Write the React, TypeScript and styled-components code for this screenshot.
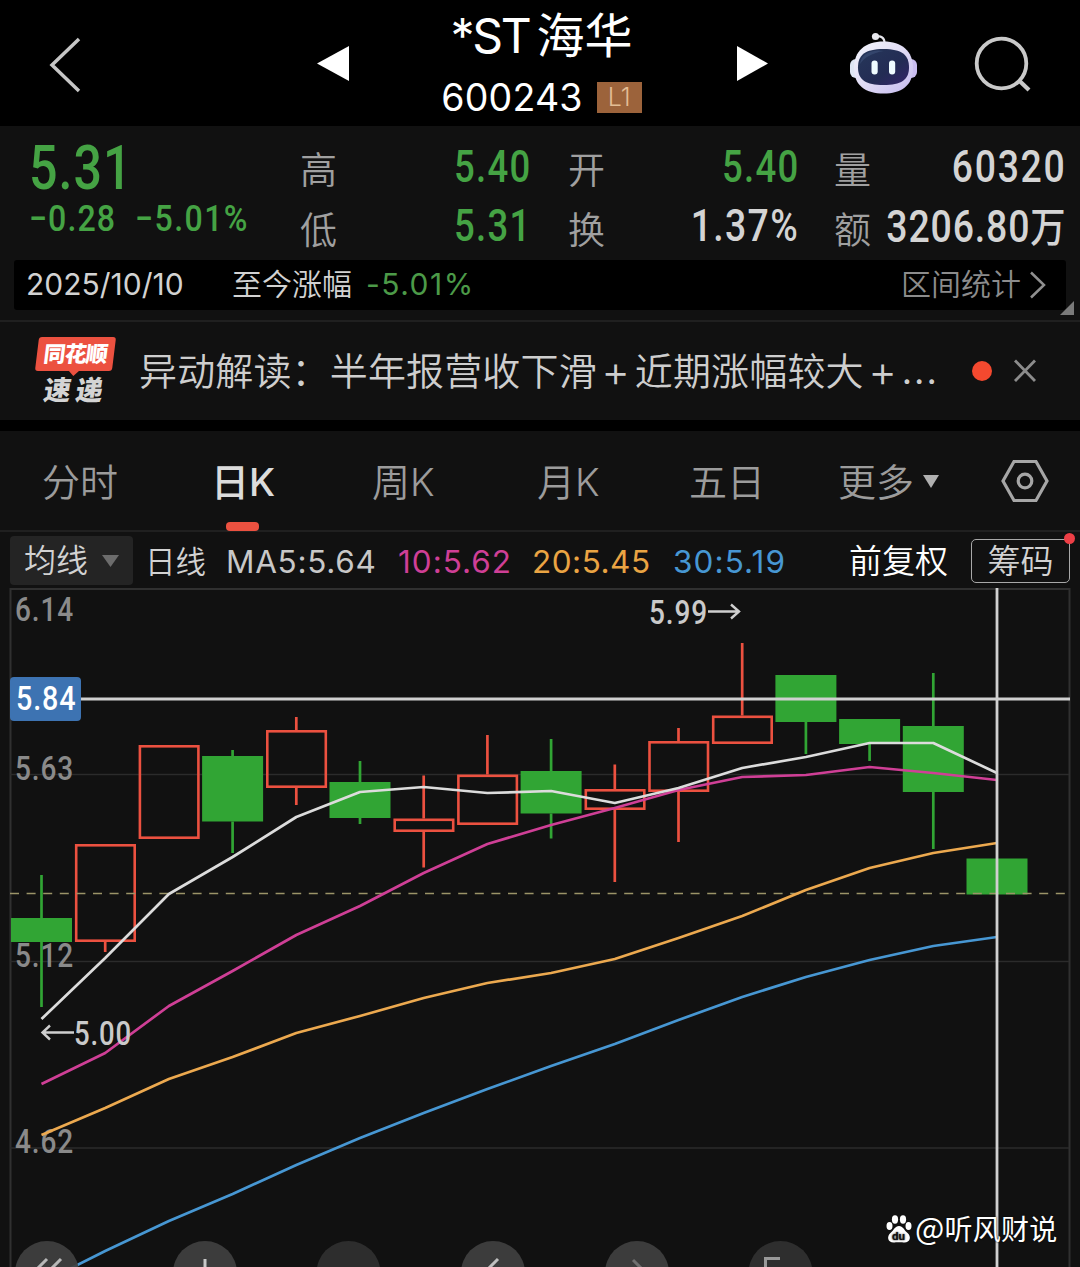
import React from "react";
import styled, { createGlobalStyle } from "styled-components";

const GREEN = "#45a344";
const RED = "#ec5140";
const PANEL = "#111111";
const UI = `Inter, "Noto Sans CJK SC", sans-serif`;
const NUM = `Roboto, "Noto Sans CJK SC", sans-serif`;

const Global = createGlobalStyle`
  * { box-sizing: border-box; }
  body { margin: 0; background: #000; }
`;

const Screen = styled.main`
  width: 1080px;
  height: 1267px;
  overflow: hidden;
  display: flex;
  flex-direction: column;
  background: ${PANEL};
  color: #d2d2d2;
  font-family: ${UI};
  font-weight: 350;
  white-space: nowrap;
`;

/* ---------- header ---------- */
const Header = styled.header`
  height: 126px;
  flex: none;
  display: grid;
  grid-template-columns: 317px 33px 384px 35px 81px 66px 58px 1fr;
  background: #000;
  color: #fff;
`;
const IconCell = styled.div<{ $top: number; $left?: number }>`
  padding: ${(p) => p.$top}px 0 0 ${(p) => p.$left ?? 0}px;
  svg { display: block; }
`;
const TitleBlock = styled.div`
  display: flex;
  flex-direction: column;
  align-items: center;
  padding: 8px 1px 0 0;
`;
const StockName = styled.div`
  display: flex;
  gap: 7px;
  height: 56px;
  line-height: 56px;
  font-size: 48px;
  font-weight: 400;
`;
const Ticker = styled.span`
  letter-spacing: -2.2px;
`;
const StockCode = styled.div`
  display: flex;
  align-items: center;
  gap: 14px;
  margin-top: 12px;
  height: 42px;
  font-size: 37.5px;
  font-weight: 400;
  letter-spacing: 0.2px;
`;
const Level = styled.span`
  width: 45px;
  height: 31px;
  line-height: 31px;
  text-align: center;
  font-size: 25px;
  font-weight: 300;
  letter-spacing: 0;
  background: #9c633b;
  color: #e3bd95;
`;

/* ---------- quote ---------- */
const Quote = styled.section`
  height: 196px;
  flex: none;
  position: relative;
  padding: 14px 14px 0;
  border-bottom: 2px solid #202020;
`;
const QuoteGrid = styled.div`
  display: grid;
  grid-template-columns: 286px 230px 38px 230px 36px 231px;
  height: 120px;
`;
const PriceBlock = styled.div`
  padding-left: 15px;
`;
const Digits = styled.div<{
  $size: number;
  $scale: number;
  $line: number;
  $color?: string;
  $right?: boolean;
  $weight?: number;
  $track?: number;
}>`
  width: max-content;
  font-family: ${NUM};
  font-size: ${(p) => p.$size}px;
  line-height: ${(p) => p.$line}px;
  font-weight: ${(p) => p.$weight ?? 500};
  letter-spacing: ${(p) => p.$track ?? 1.6}px;
  color: ${(p) => p.$color ?? "#d4d4d4"};
  transform: scaleX(${(p) => p.$scale});
  transform-origin: ${(p) => (p.$right ? "right" : "left")} center;
  margin: ${(p) => (p.$right ? "0 -1.5px 0 -60px" : "0")};
`;
const ChangeRow = styled.div`
  display: grid;
  grid-template-columns: 106px auto;
`;
const Pair = styled.div`
  display: flex;
  flex-direction: column;
`;
const Field = styled.div`
  display: flex;
  justify-content: space-between;
  height: 60px;
`;
const Label = styled.span`
  height: 60px;
  line-height: 62px;
  font-size: 37px;
  color: #a0a0a0;
`;
const Wan = styled.span`
  font-size: 41px;
`;
const RangeBar = styled.div`
  display: grid;
  grid-template-columns: 206px 134px 1fr auto 27px;
  height: 50px;
  line-height: 49px;
  padding: 0 18px 0 12px;
  border-radius: 3px;
  background: #000;
  font-size: 30px;
`;
const DateText = styled.span`
  font-weight: 400;
`;
const Drop = styled.span`
  color: #4c9a48;
  font-weight: 400;
  letter-spacing: 1.5px;
`;
const RangeLink = styled.span`
  color: #8c8c8c;
`;
const Corner = styled.svg`
  position: absolute;
  right: 6px;
  bottom: 5px;
`;

/* ---------- news ---------- */
const News = styled.section`
  height: 98px;
  flex: none;
  display: grid;
  grid-template-columns: 104px 833px 41px 1fr;
  padding-left: 35px;
`;
const Brand = styled.div`
  padding-top: 15px;
  font-weight: 900;
  color: #fff;
`;
const BrandTop = styled.div`
  position: relative;
  width: 77px;
  height: 34px;
  margin-left: 2px;
  line-height: 35px;
  font-size: 22px;
  letter-spacing: -0.9px;
  text-align: center;
  border-radius: 3px;
  background: ${RED};
  transform: skewX(-7deg);
  &::after {
    content: "";
    position: absolute;
    left: 34px;
    top: 34px;
    border: 5px solid transparent;
    border-top-color: ${RED};
    border-bottom: 0;
  }
`;
const BrandBottom = styled.div`
  display: flex;
  gap: 5px;
  padding-left: 9px;
  margin-top: 6px;
  line-height: 28px;
  font-size: 27px;
  color: #d4d4d4;
  transform: skewX(-9deg);
`;
const Headline = styled.div`
  display: flex;
  line-height: 99px;
  height: 98px;
  font-size: 38px;
  letter-spacing: 0.15px;
  color: #cecece;
`;
const Plus = styled.span`
  width: 38px;
  text-align: center;
  font-size: 44px;
  font-weight: 300;
`;
const Dots = styled.span`
  font-size: 36px;
  letter-spacing: 2px;
  font-weight: 400;
`;
const Unread = styled.i`
  width: 20px;
  height: 20px;
  margin-top: 39px;
  border-radius: 50%;
  background: #f4492f;
`;
const Divider = styled.div`
  height: 11px;
  flex: none;
  background: #000;
`;

/* ---------- tabs ---------- */
const Tabs = styled.nav`
  height: 101px;
  flex: none;
  display: grid;
  grid-template-columns: 169px 161px 165px 152px 149px 163px 1fr;
  padding-left: 42px;
  border-bottom: 2px solid #202020;
`;
const Tab = styled.div<{ $active?: boolean }>`
  position: relative;
  width: max-content;
  display: flex;
  align-items: center;
  gap: 9px;
  height: 100px;
  line-height: 46px;
  padding-top: 2px;
  font-size: 38px;
  font-weight: ${(p) => (p.$active ? 500 : 350)};
  color: ${(p) => (p.$active ? "#dcdcdc" : "#9c9c9c")};
  svg { margin-top: -2px; }
  &::after {
    content: "";
    display: ${(p) => (p.$active ? "block" : "none")};
    position: absolute;
    left: 15px;
    bottom: 0;
    width: 33px;
    height: 9px;
    border-radius: 4px;
    background: ${RED};
  }
`;

/* ---------- indicator row ---------- */
const Indicators = styled.div`
  height: 56px;
  flex: none;
  display: grid;
  grid-template-columns: 135px 81px 172px 134px 141px 176px 122px 99px;
  padding: 4px 0 0 10px;
  line-height: 51px;
  font-size: 32px;
`;
const Picker = styled.div`
  display: flex;
  align-items: center;
  gap: 14px;
  width: 123px;
  height: 49px;
  padding-left: 14px;
  border-radius: 4px;
  background: #242424;
`;
const Period = styled.span`
  font-size: 30.5px;
`;
const Average = styled.span<{ $color: string; $track?: number }>`
  color: ${(p) => p.$color};
  font-size: 31.5px;
  font-weight: 400;
  letter-spacing: ${(p) => p.$track ?? 0.7}px;
`;
const Adjust = styled.span`
  color: #fff;
  font-size: 33px;
`;
const Chips = styled.div`
  position: relative;
  height: 44px;
  margin-top: 3px;
  line-height: 42px;
  text-align: center;
  font-size: 33px;
  border: 1.5px solid #a8a8a8;
  border-radius: 5px;
  &::after {
    content: "";
    position: absolute;
    right: -6px;
    top: -7px;
    width: 11px;
    height: 11px;
    border-radius: 50%;
    background: #ee3f46;
  }
`;

/* ---------- chart ---------- */
const ChartArea = styled.section`
  position: relative;
  flex: 1;
  svg { display: block; }
`;
const PriceTag = styled.div`
  position: absolute;
  left: 10px;
  top: 89px;
  width: 71px;
  height: 44px;
  padding-left: 6px;
  border-radius: 4px;
  background: #3d73b2;
`;
const Watermark = styled.div`
  position: absolute;
  left: 886px;
  top: 622px;
  display: flex;
  align-items: center;
  gap: 3px;
  height: 38px;
  font-family: "Noto Sans CJK SC", sans-serif;
  font-size: 28px;
  font-weight: 400;
  color: #fff;
  text-shadow: 0 0 2px #000;
`;
const WatermarkText = styled.span`
  line-height: 38px;
  margin-top: -3px;
  letter-spacing: 0.2px;
`;
const At = styled.span`
  font-size: 31px;
`;

type Candle = { up?: boolean; top: number; bottom: number; high?: number; low?: number };
const candles: Candle[] = [
  { top: 918, bottom: 942, high: 875, low: 1007 },
  { up: true, top: 844, bottom: 942, low: 952 },
  { up: true, top: 745, bottom: 839 },
  { top: 756, bottom: 821.5, high: 750, low: 853 },
  { up: true, top: 730, bottom: 788, high: 717, low: 805 },
  { top: 782, bottom: 818, high: 761, low: 824 },
  { up: true, top: 818.5, bottom: 832, high: 775.5, low: 867.5 },
  { up: true, top: 774.5, bottom: 825, high: 735 },
  { top: 771, bottom: 813.5, high: 739, low: 838.5 },
  { up: true, top: 789, bottom: 810, high: 764.5, low: 882 },
  { up: true, top: 741, bottom: 792, high: 728, low: 842 },
  { up: true, top: 715.5, bottom: 744, high: 643 },
  { top: 675, bottom: 722, low: 754 },
  { top: 719, bottom: 744, low: 761 },
  { top: 726, bottom: 792, high: 673, low: 849 },
  { top: 858.5, bottom: 894.5 },
];
const averages = [
  { color: "#4797d3", y: [1283, 1251, 1221, 1194, 1165, 1138, 1113, 1089, 1066, 1044, 1020, 997, 977, 960, 946, 937] },
  { color: "#eca94f", y: [1135, 1108, 1079, 1057, 1033, 1016, 998, 983, 973, 959, 938, 916, 890, 868, 853, 843] },
  { color: "#cf3f96", y: [1084, 1053, 1006, 971, 935, 906, 873, 844, 825, 808, 790, 777, 775, 767, 773, 780] },
  { color: "#dcdcdc", y: [1019, 958, 894, 857, 817, 792, 787, 793, 791, 803, 788, 768, 757, 743, 743, 773] },
];
const centre = (i: number) => 41.5 + i * 63.7;
const axis = [
  { text: "6.14", y: 621 },
  { text: "5.63", y: 780 },
  { text: "5.12", y: 967 },
  { text: "4.62", y: 1153 },
];
const controls = [
  { x: 47, fill: "#404040", d: "M47 1259 36 1270M61 1259 50 1270", s: "#b8b8b8" },
  { x: 205, fill: "#404040", d: "M205 1259V1270", s: "#c8c8c8" },
  { x: 348.5, fill: "#2f2f2f", d: "", s: "none" },
  { x: 493, fill: "#404040", d: "M498 1259 487 1270", s: "#c0c0c0" },
  { x: 637, fill: "#404040", d: "M633 1260 642 1269", s: "#707070" },
  { x: 780.5, fill: "#303030", d: "M780 1258.5H765.5V1270", s: "#999" },
];

const Chart = () => (
  <svg width="1080" height="679" viewBox="0 588 1080 679" fill="none">
    <g stroke="#2b2b2b" strokeWidth="2">
      <path d="M10.5 1267V589H1069.5V1267" stroke="#303030" />
      <path d="M10 774.5H1069M10 961.5H1069M10 1148H1069" strokeWidth="1.5" />
    </g>
    {candles.map((c, i) => {
      const x = centre(i);
      const color = c.up ? RED : "#31a534";
      return (
        <g key={i}>
          {c.high && <path d={`M${x} ${c.high}V${c.top}`} stroke={color} strokeWidth="2.7" />}
          {c.low && <path d={`M${x} ${c.bottom}V${c.low}`} stroke={color} strokeWidth="2.7" />}
          {c.up ? (
            <rect x={x - 29} y={c.top + 1.3} width="58.5" height={c.bottom - c.top - 2.6} stroke={color} strokeWidth="2.6" />
          ) : (
            <rect x={x - 30.5} y={c.top} width="61" height={c.bottom - c.top} fill={color} />
          )}
        </g>
      );
    })}
    <g fontFamily="Roboto, sans-serif" fontSize="33" letterSpacing="1" fill="#8a8a8a" fontWeight="500">
      {axis.map((a) => (
        <text key={a.text} x="15" y={a.y} textLength="59" lengthAdjust="spacingAndGlyphs">{a.text}</text>
      ))}
    </g>
    <path d="M10 893.5H1069" stroke="#9b9468" strokeWidth="1.7" strokeDasharray="9 7.6" />
    {averages.map((a) => (
      <polyline key={a.color} points={a.y.map((y, i) => `${centre(i)},${y}`).join(" ")} stroke={a.color} strokeWidth="2.7" strokeLinejoin="round" />
    ))}
    <path d="M10 699H1070M997 588V1267" stroke="#d0d0d0" strokeWidth="2.8" />
    <g fontFamily="Roboto, sans-serif" fontSize="32.5" letterSpacing="1" fill="#cacaca" fontWeight="500">
      <text x="649" y="623.5" textLength="59" lengthAdjust="spacingAndGlyphs">5.99</text>
      <text x="74" y="1044.5" textLength="58" lengthAdjust="spacingAndGlyphs">5.00</text>
    </g>
    <path d="M708 611.5H739M731 604.5 739 611.5 731 618.5M74 1032.5H43M50 1025.5 42.5 1032.5 50 1039.5" stroke="#cfcfcf" strokeWidth="2.4" />
    {controls.map((c) => (
      <g key={c.x}>
        <circle cx={c.x} cy="1273" r="32" fill={c.fill} fillOpacity="0.93" />
        <path d={c.d} stroke={c.s} strokeWidth="3" />
      </g>
    ))}
  </svg>
);

const Robot = () => (
  <svg width="68" height="64" viewBox="850 31 68 64">
    <defs>
      <linearGradient id="shell" x1="0" y1="0" x2="1" y2="1">
        <stop offset="0" stopColor="#f4f6fc" />
        <stop offset="0.5" stopColor="#e0dcf5" />
        <stop offset="1" stopColor="#c4b9ee" />
      </linearGradient>
      <linearGradient id="face" x1="0" y1="0" x2="1" y2="1">
        <stop offset="0" stopColor="#26375a" />
        <stop offset="0.6" stopColor="#232c54" />
        <stop offset="1" stopColor="#34246a" />
      </linearGradient>
    </defs>
    <path d="M875 38C880 34.5 885 37.500 884.500 44" fill="none" stroke="#e4e4ea" strokeWidth="2.2" />
    <circle cx="875.5" cy="36.5" r="3.6" fill="#e8e8ee" />
    <rect x="850" y="59" width="14" height="19" rx="6" fill="#dfe6f4" />
    <rect x="903" y="59" width="14" height="19" rx="6" fill="#c9bdf0" />
    <path d="M883.5 41.5C902 41.5 913 51 913 68C913 86 901 93.5 883.5 93.5C866 93.5 854 86 854 68C854 51 865 41.5 883.5 41.5Z" fill="url(#shell)" />
    <path d="M883.5 49C902 49 909 55 909 67.5C909 80 901 85 883.5 85C866 85 858 80 858 67.5C858 55 865 49 883.5 49Z" fill="url(#face)" />
    <path d="M878 50.5C867 51 861 56 860 64C865 57 872 53 884 51Z" fill="#4c628c" opacity="0.4" />
    <rect x="871.5" y="60.5" width="6.2" height="14" rx="3" fill="#effcff" />
    <rect x="889" y="60.5" width="6.2" height="14" rx="3" fill="#effcff" />
  </svg>
);

export default function App() {
  return (
    <Screen>
      <Global />
      <Header>
        <IconCell $top={36} $left={48}>
          <svg width="34" height="58" viewBox="48 36 34 58" fill="none">
            <path d="M79 39 52 65 79 91" stroke="#c6c6c6" strokeWidth="3.5" />
          </svg>
        </IconCell>
        <IconCell $top={46}>
          <svg width="33" height="35"><path d="M0 17.5 32 0V35Z" fill="#fff" /></svg>
        </IconCell>
        <TitleBlock>
          <StockName><Ticker>*ST</Ticker><span>海华</span></StockName>
          <StockCode>600243<Level>L1</Level></StockCode>
        </TitleBlock>
        <IconCell $top={46} $left={3}>
          <svg width="32" height="35"><path d="M0 0 31 17.5 0 35Z" fill="#fff" /></svg>
        </IconCell>
        <span />
        <IconCell $top={31}><Robot /></IconCell>
        <span />
        <IconCell $top={35}>
          <svg width="58" height="58" viewBox="973.5 35 58 58" fill="none" stroke="#c9c9c9">
            <circle cx="1001" cy="63.5" r="24.8" strokeWidth="3.8" />
            <path d="M1018 80 1028.5 90" strokeWidth="4.2" />
          </svg>
        </IconCell>
      </Header>

      <Quote>
        <QuoteGrid>
          <PriceBlock>
            <Digits $size={60.5} $scale={0.83} $line={58} $color={GREEN} $track={1.2}>5.31</Digits>
            <ChangeRow>
              <Digits $size={36.5} $scale={0.88} $line={42} $color={GREEN} $weight={500} $track={1.2}>−0.28</Digits>
              <Digits $size={36.5} $scale={0.88} $line={42} $color={GREEN} $weight={500} $track={1.6}>−5.01%</Digits>
            </ChangeRow>
          </PriceBlock>
          <Pair>
            <Field><Label>高</Label><Digits $right $size={44.5} $scale={0.82} $line={54} $color={GREEN}>5.40</Digits></Field>
            <Field><Label>低</Label><Digits $right $size={44.5} $scale={0.82} $line={53} $color={GREEN}>5.31</Digits></Field>
          </Pair>
          <span />
          <Pair>
            <Field><Label>开</Label><Digits $right $size={44.5} $scale={0.82} $line={54} $color={GREEN}>5.40</Digits></Field>
            <Field><Label>换</Label><Digits $right $size={44.5} $scale={0.84} $line={53}>1.37%</Digits></Field>
          </Pair>
          <span />
          <Pair>
            <Field><Label>量</Label><Digits $right $size={44.5} $scale={0.84} $line={54} $track={2}>60320</Digits></Field>
            <Field><Label>额</Label><Digits $right $size={43.5} $scale={0.86} $line={55} $track={1}>3206.80<Wan>万</Wan></Digits></Field>
          </Pair>
        </QuoteGrid>
        <RangeBar>
          <DateText>2025/10/10</DateText>
          <span>至今涨幅</span>
          <Drop>-5.01%</Drop>
          <RangeLink>区间统计</RangeLink>
          <svg width="27" height="50" fill="none"><path d="M10 12.5 23 25 10 37.5" stroke="#8f8f8f" strokeWidth="2.5" /></svg>
        </RangeBar>
        <Corner width="14" height="14"><path d="M14 0V14H0Z" fill="#7a7a7a" /></Corner>
      </Quote>

      <News>
        <Brand>
          <BrandTop>同花顺</BrandTop>
          <BrandBottom><span>速</span><span>递</span></BrandBottom>
        </Brand>
        <Headline>
          <span>异动解读：半年报营收下滑</span><Plus>+</Plus><span>近期涨幅较大</span><Plus>+</Plus><Dots>...</Dots>
        </Headline>
        <Unread />
        <svg width="26" height="98" fill="none"><path d="M2 38.5 22 59M22 38.5 2 59" stroke="#8c8c8c" strokeWidth="2.8" /></svg>
      </News>
      <Divider />

      <Tabs>
        <Tab>分时</Tab>
        <Tab $active>日K</Tab>
        <Tab>周K</Tab>
        <Tab>月K</Tab>
        <Tab>五日</Tab>
        <Tab>更多<svg width="16" height="13"><path d="M0 0H16L8 13Z" fill="#b0b0b0" /></svg></Tab>
        <svg width="48" height="98" viewBox="1001 431 48 98" fill="none" stroke="#a6a6a6" strokeWidth="3.2">
          <path d="M1014 461.5H1036L1047 481 1036 500.5H1014L1003 481Z" />
          <circle cx="1025" cy="481" r="6.8" />
        </svg>
      </Tabs>

      <Indicators>
        <Picker>均线<svg width="17" height="12"><path d="M0 0H17L8.5 12Z" fill="#6c6c6c" /></svg></Picker>
        <Period>日线</Period>
        <Average $color="#c8c8c8">MA5:5.64</Average>
        <Average $color="#cf3f96" $track={1}>10:5.62</Average>
        <Average $color="#eaa443" $track={0.5}>20:5.45</Average>
        <Average $color="#4797d3" $track={1.1}>30:5.19</Average>
        <Adjust>前复权</Adjust>
        <Chips>筹码</Chips>
      </Indicators>

      <ChartArea>
        <Chart />
        <PriceTag><Digits $size={33} $scale={0.87} $line={43} $color="#fff" $track={1}>5.84</Digits></PriceTag>
        <Watermark>
          <svg width="26" height="28" viewBox="0 0 26 28" fill="#fff">
            <ellipse cx="3.5" cy="11" rx="3" ry="4" />
            <ellipse cx="9" cy="4.5" rx="3.1" ry="4.2" />
            <ellipse cx="17" cy="4.5" rx="3.1" ry="4.2" />
            <ellipse cx="22.5" cy="11" rx="3" ry="4" />
            <path d="M13 11C17 11 18 15 21 17.5C26 21.5 24 27.5 18.5 27.5C16 27 10 27 7.5 27.5C2 27.5 0 21.5 5 17.5C8 15 9 11 13 11Z" />
            <text x="6" y="24.5" fontFamily="Roboto, sans-serif" fontSize="11.5" fontWeight="700" fill="#111" textLength="13">du</text>
          </svg>
          <WatermarkText><At>@</At>听风财说</WatermarkText>
        </Watermark>
      </ChartArea>
    </Screen>
  );
}
